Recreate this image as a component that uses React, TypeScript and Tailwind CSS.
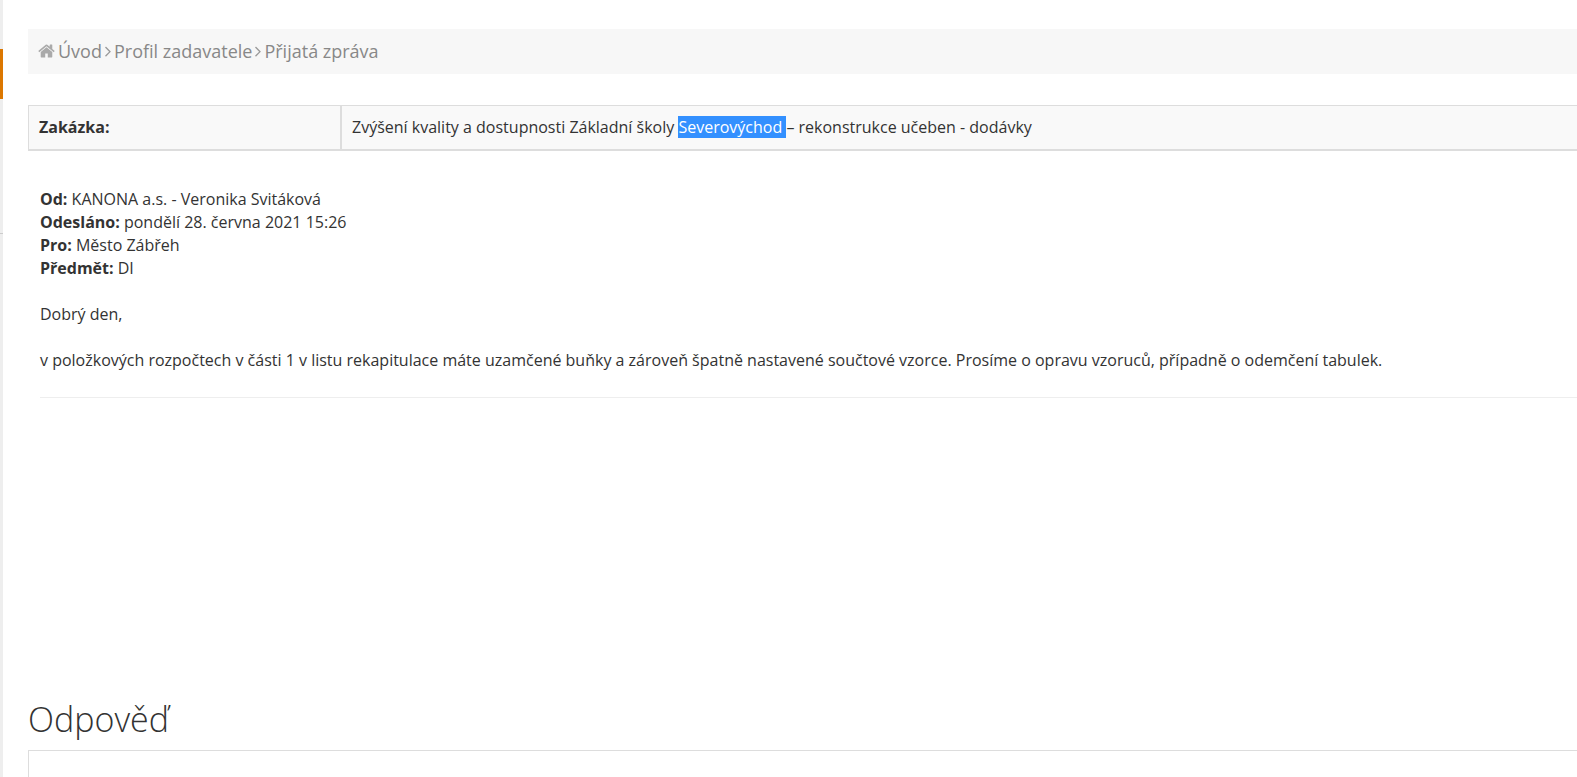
const breadcrumbs = ['Úvod', 'Profil zadavatele', 'Přijatá zpráva'];

const headers = [
  { label: 'Od:', value: 'KANONA a.s. - Veronika Svitáková' },
  { label: 'Odesláno:', value: 'pondělí 28. června 2021 15:26' },
  { label: 'Pro:', value: 'Město Zábřeh' },
  { label: 'Předmět:', value: 'DI' },
];

function HomeIcon() {
  return (
    <svg viewBox="64 0 1664 1792" fill="currentColor" className="mr-[3px] h-[18px] w-[17px] text-[#aaa]">
      <path d="M1472 992v480q0 26-19 45t-45 19h-384v-384h-256v384h-384q-26 0-45-19t-19-45v-480q0-1 .5-3t.5-3l575-474 575 474q1 2 1 6zm223-69l-62 74q-8 9-21 11h-3q-13 0-21-7l-692-577-692 577q-12 8-24 7-13-2-21-11l-62-74q-8-10-7-23.5t11-21.5l719-599q32-26 76-26t76 26l244 204v-195q0-14 9-23t23-9h192q14 0 23 9t9 23v408l219 182q10 8 11 21.5t-7 23.5z" />
    </svg>
  );
}

function AngleRightIcon() {
  return (
    <svg viewBox="576 0 608 1792" fill="currentColor" className="mx-[3px] h-[18px] w-[6px] text-[#999]">
      <path d="M1171 960q0 13-10 23l-466 466q-10 10-23 10t-23-10l-50-50q-10-10-10-23t10-23l393-393-393-393q-10-10-10-23t10-23l50-50q10-10 23-10t23 10l466 466q10 10 10 23z" />
    </svg>
  );
}

export default function App() {
  return (
    <div className="flex min-h-screen overflow-hidden bg-white font-['Open_Sans',sans-serif] text-base text-[#333]">
      {/* Sidebar edge */}
      <aside className="w-[3px] shrink-0 bg-[#eee]">
        <div className="mt-[49px] h-[50px] bg-[#dc7700]" />
        <div className="mt-[134px] h-px bg-[#ccc]" />
      </aside>

      <main className="flex min-w-0 flex-1 flex-col pl-[25px] pt-[29px]">
        <nav className="flex h-[45px] items-center bg-[#f7f7f7] px-[10px] pb-[2px] text-lg leading-6 text-[#888]">
          <HomeIcon />
          {breadcrumbs.map((item, index) => (
            <span key={item} className="flex items-center">
              {index > 0 && <AngleRightIcon />}
              <a href="#">{item}</a>
            </span>
          ))}
        </nav>

        <table className="mt-[31px] w-full border-separate border-spacing-0 bg-[#f9f9f9] text-left leading-[23px]">
          <tbody>
            <tr>
              <th className="w-[314px] border border-r-2 border-b-2 border-[#ddd] px-[10px] py-[10px] font-bold">
                Zakázka:
              </th>
              <td className="border-t border-b-2 border-[#ddd] px-[10px] py-[10px]">
                Zvýšení kvality a dostupnosti Základní školy{' '}
                <mark className="bg-[#3390ff] text-white">Severovýchod </mark>– rekonstrukce učeben - dodávky
              </td>
            </tr>
          </tbody>
        </table>

        <section className="ml-3 mt-[37px] h-[506px] leading-[23px]">
          {headers.map(({ label, value }) => (
            <p key={label}>
              <strong>{label}</strong> {value}
            </p>
          ))}
          <p className="mt-[23px]">Dobrý den,</p>
          <p className="mt-[23px]">
            v položkových rozpočtech v části 1 v listu rekapitulace máte uzamčené buňky a zároveň špatně nastavené
            součtové vzorce. Prosíme o opravu vzoruců, případně o odemčení tabulek.
          </p>
          <hr className="mt-[25px] border-[#eee]" />
        </section>

        <h2 className="text-[34px] font-light leading-[50px]">Odpověď</h2>
        <div className="mt-[6px] flex-1 border-l border-t border-[#ddd]" />
      </main>
    </div>
  );
}
